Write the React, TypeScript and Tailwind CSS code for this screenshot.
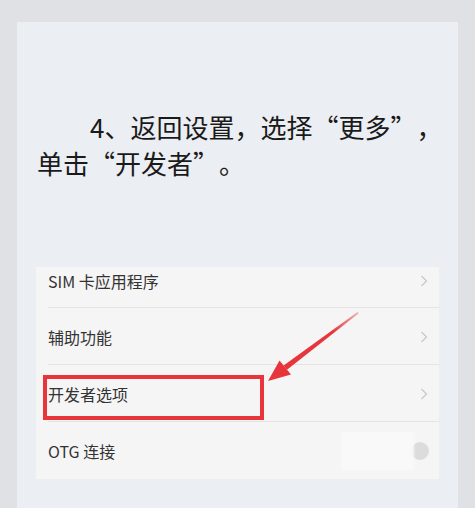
import React from "react";

const font = { fontFamily: '"Noto Sans CJK SC", "Noto Sans", sans-serif' };

function Chevron() {
  return (
    <svg width="8" height="12" viewBox="0 0 8 12" className="shrink-0">
      <path d="M1.5 1 L6.5 6 L1.5 11" fill="none" stroke="#c9c9c9" strokeWidth="1.3" />
    </svg>
  );
}

function LQ() {
  return <span className="inline-block w-[1em] text-right indent-0">“</span>;
}
function RQ() {
  return <span className="inline-block w-[1em] text-left indent-0">”</span>;
}

export default function App() {
  return (
    <div
      className="relative w-[475px] h-[508px] overflow-hidden bg-[#dfe1e4] pt-[22px] pl-[17px]"
      style={font}
    >
      <div className="w-[441px] h-[486px] bg-[#ebeef2] px-[19px]">
        <div className="pt-[87px] pl-[1px] w-[420px] text-[26px] leading-[36px] text-[#1a1a1a] indent-[53px] whitespace-nowrap">
          4、返回设置，选择<LQ />更多<RQ />，
          <br />
          单击<LQ />开发者<RQ />。
        </div>
        <div className="mt-[86px] w-[403px] bg-[#f5f5f5] text-[16px] text-[#333333]">
          <div className="h-[41px] flex items-center pb-[13px] pl-[12px] pr-[11px] relative">
            <span className="flex-1">SIM 卡应用程序</span>
            <Chevron />
            <div className="absolute left-[12px] right-0 bottom-0 h-px bg-[#e4e4e4]" />
          </div>
          <div className="h-[57px] flex items-center pl-[12px] pr-[11px] relative">
            <span className="flex-1">辅助功能</span>
            <Chevron />
            <div className="absolute left-[12px] right-0 bottom-0 h-px bg-[#e4e4e4]" />
          </div>
          <div className="h-[57px] flex items-center pl-[12px] pr-[11px] relative">
            <span className="flex-1">开发者选项</span>
            <Chevron />
            <div className="absolute left-[12px] right-0 bottom-0 h-px bg-[#e4e4e4]" />
          </div>
          <div className="h-[57px] flex items-center pl-[12px] pr-[10px]">
            <span className="flex-1">OTG 连接</span>
            <div className="relative w-[88px] h-[38px]">
              <div className="absolute right-0 top-[10px] w-[18px] h-[18px] rounded-full bg-[#dcdcdc]" />
              <div className="absolute left-0 top-0 w-[73px] h-[38px] bg-[#f9f9f9] blur-[1px]" />
            </div>
          </div>
        </div>
      </div>

      <div className="absolute left-[43px] top-[375px] w-[221px] h-[45px] border-[4px] border-[#e8353b]" />

      <svg
        className="absolute left-0 top-0 pointer-events-none"
        width="475"
        height="508"
        viewBox="0 0 475 508"
      >
        <defs>
          <linearGradient id="ag" x1="358" y1="312" x2="285" y2="368" gradientUnits="userSpaceOnUse">
            <stop offset="0" stopColor="#e8353b" stopOpacity="0.35" />
            <stop offset="0.35" stopColor="#e8353b" stopOpacity="1" />
            <stop offset="1" stopColor="#e8353b" stopOpacity="1" />
          </linearGradient>
        </defs>
        <polygon points="357.5,312 358.8,313.3 287,369.8 283.6,365.4" fill="url(#ag)" />
        <polygon points="268,381 279.5,360.5 291,374.5" fill="#e8353b" />
      </svg>
    </div>
  );
}
